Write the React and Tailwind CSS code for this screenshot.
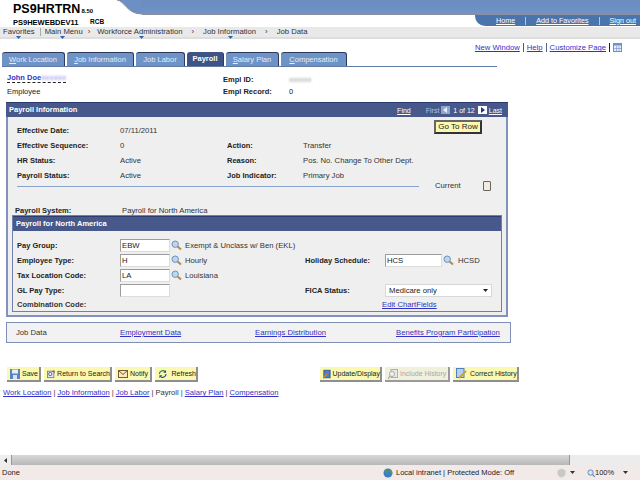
const font = { fontFamily: '"Liberation Sans", Arial, sans-serif' };

function Lookup() {
  return (
    <svg width="11" height="11" viewBox="0 0 11 11" className="shrink-0">
      <line x1="6" y1="6" x2="10" y2="9.5" stroke="#b08a50" strokeWidth="2" />
      <circle cx="4.2" cy="4.2" r="3.2" fill="#bcd6f0" stroke="#6f93b8" />
    </svg>
  );
}

function NavItem({ label, arrow }) {
  return (
    <span className="relative whitespace-nowrap">
      {label}
      <svg width="5" height="3" viewBox="0 0 5 3" className="absolute top-[8px]" style={{ left: arrow }}>
        <path d="M0 0h5L2.5 3z" fill="#2f62a8" />
      </svg>
    </span>
  );
}

function Tab({ u, rest, w, active }) {
  return (
    <div
      className={
        active
          ? "flex h-[14px] items-center justify-center rounded-t-[3px] border-r border-[#2c3a60] bg-[#3f5384] font-bold text-white"
          : "flex h-[14px] items-center justify-center rounded-t-[3px] border-r border-t border-[#2c3a60] bg-[#6e93c6] text-[#e4ecf8]"
      }
      style={{ width: w }}
    >
      <span>
        {u ? <span className="underline">{u}</span> : null}
        {rest}
      </span>
    </div>
  );
}

function ToolButton({ icon, label, w, disabled }) {
  return (
    <div
      className={
        disabled
          ? "flex h-[15px] items-center gap-[2px] border-r-2 border-b-2 border-[#9a9a9a] bg-[#f0f0dc] pl-[3px] text-[#a8a8a8]"
          : "flex h-[15px] items-center gap-[2px] border-r-2 border-b-2 border-[#8f8f8f] bg-[#fbf8b0] pl-[3px] text-[#1a1a1a]"
      }
      style={{ width: w }}
    >
      {icon}
      <span className="whitespace-nowrap">{label}</span>
    </div>
  );
}

function InfoRow({ l1, v1, l2, v2 }) {
  return (
    <div className="grid h-[15px] grid-cols-[103px_107px_76px_1fr] items-center">
      <span className="text-[7.5px] font-bold text-[#222]">{l1}</span>
      <span className="text-[#333]">{v1}</span>
      <span className="text-[7.5px] font-bold text-[#222]">{l2}</span>
      <span className="text-[#333]">{v2}</span>
    </div>
  );
}

function Field({ value, w = "w-[50px]" }) {
  return (
    <div className={`${w} flex h-[13px] items-center border border-t-[#9c9c9c] border-l-[#9c9c9c] border-r-[#dcdcdc] border-b-[#dcdcdc] bg-white pl-[1px] text-[#222]`}>
      {value}
    </div>
  );
}

export default function App() {
  return (
    <div className="flex h-[480px] w-[640px] flex-col overflow-hidden bg-white text-[8px] leading-none" style={font}>
      {/* top banner */}
      <div className="flex h-[27px] shrink-0">
        <div className="w-[117px] shrink-0 pl-[13px] pt-[3px] text-black">
          <div className="flex items-baseline">
            <span className="text-[12.500px] font-bold">PS9HRTRN</span>
            <span className="ml-[1px] text-[6px] font-bold">8.50</span>
          </div>
          <div className="mt-[3px] flex text-[7.5px] font-bold">
            <span className="w-[77px]">PS9HEWEBDEV11</span>
            <span className="text-[6.5px]">RCB</span>
          </div>
        </div>
        <div className="flex flex-1 flex-col">
          <div className="flex h-[15px]">
            <svg width="25" height="15" viewBox="0 0 25 15" className="shrink-0">
              <path d="M0 0 C8 1 10 14 25 14 L25 0 Z" fill="#6d8fc3" />
              <path d="M0 0 C8 1 10 14 25 14" fill="none" stroke="#8a8f9e" strokeWidth="1" />
            </svg>
            <div className="flex-1 border-b border-[#8a8f9e] bg-gradient-to-b from-[#6a8cc0] to-[#7093c8]"></div>
          </div>
          <div className="flex h-[11px] justify-end">
            <div className="flex w-[165px] items-center whitespace-nowrap rounded-bl-[10px] bg-[#4a74ac] text-[7.2px] text-white">
              <span className="ml-[21px] underline">Home</span>
              <span className="ml-[10px] h-[8px] border-l border-[#b8c8e0]"></span>
              <span className="ml-[10px] underline">Add to Favorites</span>
              <span className="ml-[10px] h-[8px] border-l border-[#b8c8e0]"></span>
              <span className="ml-[10px] underline">Sign out</span>
            </div>
          </div>
        </div>
      </div>

      {/* breadcrumb nav */}
      <div className="flex h-[12px] shrink-0 items-center border-b-[2px] border-[#dedede] bg-[#e9e9e9] pl-[3px] text-[7.7px] text-[#333]">
        <NavItem label="Favorites" arrow={13} />
        <span className="ml-[5px] mr-[4px] h-[8px] border-l border-[#aaa]"></span>
        <NavItem label="Main Menu" arrow={15} />
        <span className="ml-[5px] mr-[7px]">›</span>
        <NavItem label="Workforce Administration" arrow={42} />
        <span className="mx-[9px]">›</span>
        <NavItem label="Job Information" arrow={25} />
        <span className="ml-[9px] mr-[9px]">›</span>
        <span>Job Data</span>
      </div>

      {/* page links */}
      <div className="flex h-[13px] shrink-0 items-end justify-end pr-[18px] text-[7.7px] text-[#3232c8]">
        <span className="underline">New Window</span>
        <span className="mx-[3px] h-[9px] border-l border-[#a04040]"></span>
        <span className="underline">Help</span>
        <span className="mx-[3px] h-[9px] border-l border-[#506890]"></span>
        <span className="underline">Customize Page</span>
        <span className="mx-[3px] h-[9px] border-l border-[#222]"></span>
        <svg width="9" height="9" viewBox="0 0 9 9">
          <rect x="0.5" y="0.5" width="8" height="8" fill="#e4eefa" stroke="#6d93c6" />
          <rect x="0.5" y="0.5" width="8" height="2" fill="#6d93c6" />
          <path d="M3.5 3v5M6 3v5M1 5.5h7" stroke="#6d93c6" strokeWidth="0.6" />
        </svg>
      </div>

      {/* tabs */}
      <div className="h-[14px] shrink-0 pl-[2px]">
        <div className="flex w-[495px] gap-[2px] border-b border-[#5f7ba5] text-[7.5px]">
          <Tab u="W" rest="ork Location" w={63} />
          <Tab u="J" rest="ob Information" w={67} />
          <Tab rest="Job Labor" w={49} />
          <Tab rest="Payroll" w={37} active />
          <Tab u="S" rest="alary Plan" w={53} />
          <Tab u="C" rest="ompensation" w={66} />
        </div>
      </div>

      {/* employee */}
      <div className="mt-[8px] grid h-[23px] shrink-0 grid-cols-[216px_66px_1fr] grid-rows-2 items-center pl-[7px] text-[7.5px]">
        <span className="flex items-center self-start">
          <span className="border-b border-dashed border-[#222] font-bold text-[#3232c8]">
            John Doe
            <span className="text-[#a8a8f0] blur-[1px]">xxxxxx</span>
          </span>
        </span>
        <span className="font-bold text-[#222]">Empl ID:</span>
        <span className="text-[#999] blur-[1px]">xxxxxx</span>
        <span className="text-[#222]">Employee</span>
        <span className="font-bold text-[#222]">Empl Record:</span>
        <span className="text-[#222]">0</span>
      </div>

      {/* payroll information panel */}
      <div className="ml-[6px] mt-[5px] h-[215px] w-[502px] shrink-0 border-r-2 border-b-2 border-l-2 border-[#8292bc] bg-[#efefef] text-[7.7px]">
        <div className="-mx-[2px] flex h-[15px] items-center border-t border-[#2c3c70] bg-[#47598a] pl-[3px] pr-[6px] font-bold text-white">
          <span className="text-[7.5px]">Payroll Information</span>
          <span className="ml-auto text-[7px] font-normal underline">Find</span>
          <span className="ml-[15px] text-[7px] font-normal text-[#b8c2dc]">First</span>
          <span className="ml-[2px] flex h-[8px] w-[9px] items-center justify-center bg-[#8ea6cc]">
            <svg width="5" height="6" viewBox="0 0 5 6"><path d="M4 0v6L0 3z" fill="#e8eef8" /></svg>
          </span>
          <span className="ml-[3px] text-[7px] font-normal">1 of 12</span>
          <span className="ml-[3px] flex h-[8px] w-[9px] items-center justify-center bg-white">
            <svg width="5" height="6" viewBox="0 0 5 6"><path d="M1 0v6l4-3z" fill="#1c3c78" /></svg>
          </span>
          <span className="ml-[2px] text-[7px] font-normal underline">Last</span>
        </div>

        <div className="relative pl-[9px] pt-[6px]">
          <div className="absolute right-[24px] top-[3px] flex h-[14px] w-[48px] items-center justify-center border-2 border-t-[#666] border-l-[#666] border-r-[#333] border-b-[#333] bg-[#fbf8b0] text-[8px] text-[#222]">
            Go To Row
          </div>
          <InfoRow l1="Effective Date:" v1="07/11/2011" />
          <InfoRow l1="Effective Sequence:" v1="0" l2="Action:" v2="Transfer" />
          <InfoRow l1="HR Status:" v1="Active" l2="Reason:" v2="Pos. No. Change To Other Dept." />
          <InfoRow l1="Payroll Status:" v1="Active" l2="Job Indicator:" v2="Primary Job" />
          <div className="-mt-[2px] flex h-[10px] items-center">
            <div className="w-[402px] border-t border-[#8aa4d0]"></div>
            <span className="ml-[16px] text-[#333]">Current</span>
            <span className="ml-[22px] h-[10px] w-[8px] rounded-[1px] border border-[#666] bg-[#f2ecdc]"></span>
          </div>
        </div>

        <div className="mt-[15px] flex h-[9px] items-center pl-[7px]">
          <span className="w-[107px] text-[7.5px] font-bold text-[#222]">Payroll System:</span>
          <span className="text-[#333]">Payroll for North America</span>
        </div>

        {/* payroll for north america */}
        <div className="ml-[4px] h-[97px] w-[490px] border border-[#6f80ac]">
          <div className="flex h-[15px] items-center border-t border-[#2c3c70] bg-[#47598a] pl-[3px] text-[7.5px] font-bold text-white">
            Payroll for North America
          </div>
          <div className="grid grid-cols-[103px_185px_80px_1fr] grid-rows-[15px_15px_15px_15px_14px] items-center pl-[4px] pt-[7px]">
            <span className="text-[7.5px] font-bold text-[#222]">Pay Group:</span>
            <div className="flex items-center gap-[1px]">
              <Field value="EBW" />
              <Lookup />
              <span className="ml-[2px] text-[#333]">Exempt &amp; Unclass w/ Ben (EKL)</span>
            </div>
            <span></span>
            <span></span>

            <span className="text-[7.5px] font-bold text-[#222]">Employee Type:</span>
            <div className="flex items-center gap-[1px]">
              <Field value="H" />
              <Lookup />
              <span className="ml-[2px] text-[#333]">Hourly</span>
            </div>
            <span className="text-[7.5px] font-bold text-[#222]">Holiday Schedule:</span>
            <div className="flex items-center gap-[1px]">
              <Field value="HCS" w="w-[57px]" />
              <Lookup />
              <span className="ml-[3px] text-[#333]">HCSD</span>
            </div>

            <span className="text-[7.5px] font-bold text-[#222]">Tax Location Code:</span>
            <div className="flex items-center gap-[1px]">
              <Field value="LA" />
              <Lookup />
              <span className="ml-[2px] text-[#333]">Louisiana</span>
            </div>
            <span></span>
            <span></span>

            <span className="text-[7.5px] font-bold text-[#222]">GL Pay Type:</span>
            <Field value="" />
            <span className="text-[7.5px] font-bold text-[#222]">FICA Status:</span>
            <div className="flex h-[13px] w-[107px] items-center border border-[#d8d8d8] bg-white pl-[3px] pr-[3px] text-[#222]">
              <span>Medicare only</span>
              <svg width="5" height="3" viewBox="0 0 5 3" className="ml-auto"><path d="M0 0h5L2.5 3z" fill="#222" /></svg>
            </div>

            <span className="text-[7.5px] font-bold text-[#333]">Combination Code:</span>
            <span></span>
            <span></span>
            <span className="-ml-[3px] text-[#3232c8] underline">Edit ChartFields</span>
          </div>
        </div>
      </div>

      {/* related links */}
      <div className="ml-[6px] mt-[5px] flex h-[21px] w-[505px] shrink-0 items-center border border-[#7f90b8] bg-[#f2f2f2] pl-[9px] text-[7.7px] text-[#3232c8]">
        <span className="w-[104px] text-[#333]">Job Data</span>
        <span className="w-[135px] underline">Employment Data</span>
        <span className="w-[141px] underline">Earnings Distribution</span>
        <span className="underline">Benefits Program Participation</span>
      </div>

      {/* toolbar */}
      <div className="ml-[7px] mt-[24px] flex h-[16px] shrink-0 text-[7px]">
        <div className="flex gap-[3px]">
          <ToolButton
            w={34}
            label="Save"
            icon={
              <svg width="10" height="10" viewBox="0 0 10 10">
                <rect width="10" height="10" fill="#5a84c0" />
                <rect x="2" y="0.5" width="6" height="4" fill="#e8eef8" />
                <rect x="3" y="6" width="4" height="4" fill="#d8e2f0" />
              </svg>
            }
          />
          <ToolButton
            w={68}
            label="Return to Search"
            icon={
              <svg width="10" height="10" viewBox="0 0 10 10">
                <rect x="0.5" y="1.5" width="8" height="8" fill="#dfe8f4" stroke="#5a7ca8" />
                <circle cx="4" cy="5" r="2" fill="#fff" stroke="#446" />
                <path d="M6 2l3-1v3" fill="none" stroke="#c04020" />
              </svg>
            }
          />
          <ToolButton
            w={37}
            label="Notify"
            icon={
              <svg width="10" height="10" viewBox="0 0 10 10">
                <rect x="0.5" y="1.5" width="9" height="7" fill="#f8e8c0" stroke="#7a5a30" />
                <path d="M1 2l4 3.5L9 2" fill="none" stroke="#7a5a30" />
              </svg>
            }
          />
          <ToolButton
            w={43}
            label="Refresh"
            icon={
              <svg width="10" height="10" viewBox="0 0 10 10" className="mr-[2px]">
                <path d="M1.5 5a3.5 3.5 0 0 1 6-2.4" fill="none" stroke="#2a8040" strokeWidth="1.2" />
                <path d="M8.5 5a3.5 3.5 0 0 1-6 2.4" fill="none" stroke="#24457a" strokeWidth="1.2" />
                <path d="M8.5 0.8v3h-3zM1.5 9.2v-3h3z" fill="#24457a" />
              </svg>
            }
          />
        </div>
        <div className="ml-[122px] flex gap-[3px]">
          <ToolButton
            w={62}
            label="Update/Display"
            icon={
              <svg width="9" height="10" viewBox="0 0 9 10">
                <rect x="1" y="0.5" width="7.5" height="9" fill="#4f7fc0" stroke="#2c5490" />
                <path d="M0 10l5-5" stroke="#e08020" strokeWidth="1.5" />
              </svg>
            }
          />
          <ToolButton
            w={65}
            disabled
            label="Include History"
            icon={
              <svg width="10" height="10" viewBox="0 0 10 10">
                <rect x="3" y="0.5" width="6.5" height="8" fill="#e8e8e8" stroke="#b0b0b0" />
                <circle cx="4" cy="5" r="2.5" fill="#f4f4f4" stroke="#aaa" />
                <path d="M2 7l-2 3" stroke="#aaa" strokeWidth="1.3" />
              </svg>
            }
          />
          <ToolButton
            w={66}
            label="Correct History"
            icon={
              <svg width="11" height="11" viewBox="0 0 11 11" className="mr-[1px]">
                <rect x="0.5" y="0.5" width="7.5" height="9" fill="#b8d0f0" stroke="#4f7fc0" />
                <path d="M3 10l7-7" stroke="#d8a020" strokeWidth="2" />
              </svg>
            }
          />
        </div>
      </div>

      {/* bottom links */}
      <div className="ml-[3px] mt-[5px] flex h-[10px] shrink-0 items-center gap-[2px] text-[7.6px] text-[#3232c8]">
        <span className="underline">Work Location</span>
        <span className="text-[#334]">|</span>
        <span className="underline">Job Information</span>
        <span className="text-[#334]">|</span>
        <span className="underline">Job Labor</span>
        <span className="text-[#334]">|</span>
        <span className="text-[#333]">Payroll</span>
        <span className="text-[#334]">|</span>
        <span className="underline">Salary Plan</span>
        <span className="text-[#334]">|</span>
        <span className="underline">Compensation</span>
      </div>

      {/* browser chrome */}
      <div className="mt-auto flex h-[10px] shrink-0 items-stretch bg-[#ececec]">
        <div className="flex w-[12px] items-center justify-center border-r border-[#999] bg-[#eee]">
          <svg width="3" height="5" viewBox="0 0 3 5"><path d="M3 0v5L0 2.5z" fill="#333" /></svg>
        </div>
        <div className="w-[558px] border-r border-[#999] bg-gradient-to-b from-[#d8d8d8] to-[#b8b8b8]"></div>
      </div>
      <div className="flex h-[15px] shrink-0 items-center bg-[#f2e9e9] pl-[2px] text-[7.5px] text-[#222]">
        <span className="w-[18px]">Done</span>
        <svg width="10" height="10" viewBox="0 0 10 10" className="ml-[363px]">
          <circle cx="5" cy="5" r="4.5" fill="#3d7ec0" />
          <path d="M2 3c2-1 3 1 2 3M6 2l3 3" stroke="#5aa040" strokeWidth="1.5" fill="none" />
        </svg>
        <span className="ml-[3px] w-[117px] whitespace-nowrap">Local intranet | Protected Mode: Off</span>
        <svg width="9" height="10" viewBox="0 0 9 10" className="ml-[44px]">
          <path d="M4.5 0.5l4 2v3c0 2-2 3.500-4 4-2-.5-4-2-4-4v-3z" fill="#c8c8c8" />
        </svg>
        <svg width="5" height="3" viewBox="0 0 5 3" className="ml-[4px]"><path d="M0 0h5L2.5 3z" fill="#333" /></svg>
        <svg width="8" height="8" viewBox="0 0 9 9" className="ml-[12px]">
          <circle cx="4" cy="4" r="3" fill="#d4e4f6" stroke="#5a84b8" />
          <path d="M6 6l3 3" stroke="#5a84b8" strokeWidth="1.3" />
        </svg>
        <span className="w-[17px]">100%</span>
        <svg width="5" height="3" viewBox="0 0 5 3" className="ml-[11px]"><path d="M0 0h5L2.5 3z" fill="#333" /></svg>
      </div>
    </div>
  );
}
